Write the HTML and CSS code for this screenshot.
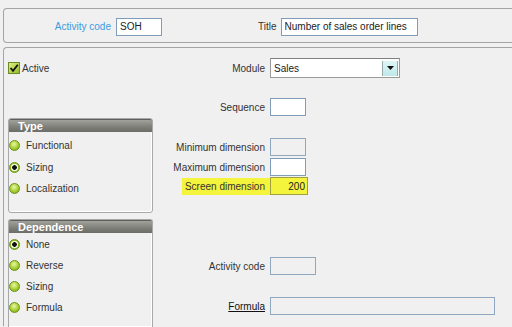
FILE: index.html
```html
<!DOCTYPE html>
<html lang="en">
<head>
  <meta charset="UTF-8">
  <title>Activity code SOH</title>
  <link rel="stylesheet" href="styles.css">
</head>
<body>

<div class="panel head">
  <label class="key">Activity code</label>
  <input class="field code" type="text" value="SOH">
  <label class="title-label">Title</label>
  <input class="field title" type="text" value="Number of sales order lines">
</div>

<div class="panel main">
  <div class="left">
    <div class="active">
      <svg class="check" width="12" height="12" viewBox="0 0 12 12">
        <defs>
          <linearGradient id="chk" x1="0" y1="0" x2="1" y2="1">
            <stop offset="0" stop-color="#e6f08a"/>
            <stop offset="1" stop-color="#8fb82a"/>
          </linearGradient>
        </defs>
        <rect x="0.5" y="0.5" width="11" height="11" fill="url(#chk)" stroke="#6b8c1e"/>
        <path d="M2.5 6 L5 8.8 L9.8 2.8" fill="none" stroke="#111" stroke-width="1.8"/>
      </svg>
      <span>Active</span>
    </div>

    <div class="group type">
      <div class="group-title">Type</div>
      <div class="opt"><span class="radio"></span>Functional</div>
      <div class="opt"><span class="radio on"></span>Sizing</div>
      <div class="opt"><span class="radio"></span>Localization</div>
    </div>

    <div class="group dep">
      <div class="group-title">Dependence</div>
      <div class="opt"><span class="radio on"></span>None</div>
      <div class="opt"><span class="radio"></span>Reverse</div>
      <div class="opt"><span class="radio"></span>Sizing</div>
      <div class="opt"><span class="radio"></span>Formula</div>
    </div>
  </div>

  <div class="right">
    <div class="row r-module">
      <label>Module</label>
      <div class="combo">
        <span>Sales</span>
        <span class="drop">
          <svg width="7" height="4" viewBox="0 0 7 4"><path d="M0 0 H7 L3.5 4 Z" fill="#111"/></svg>
        </span>
      </div>
    </div>
    <div class="row r-seq">
      <label>Sequence</label>
      <input class="field small" type="text">
    </div>
    <div class="row r-min">
      <label>Minimum dimension</label>
      <input class="field small off" type="text">
    </div>
    <div class="row r-max">
      <label>Maximum dimension</label>
      <input class="field small" type="text">
    </div>
    <div class="row r-screen">
      <label><span class="mark">Screen dimension</span></label>
      <input class="field small hl" type="text" value="200">
    </div>
    <div class="row r-act">
      <label>Activity code</label>
      <input class="field code off" type="text">
    </div>
    <div class="row r-formula">
      <label class="link">Formula</label>
      <input class="field wide off" type="text">
    </div>
  </div>
</div>

</body>
</html>
```

FILE: styles.css
```css
body {
  margin: 0;
  background: #f0f0f0;
  font-family: 'Liberation Sans', Arial, sans-serif;
  font-size: 10px;
  color: #333;
  overflow: hidden;
  width: 512px;
  height: 327px;
}

.panel {
  border: 1px solid #a4a4a4;
  border-right: none;
  border-radius: 4px 0 0 4px;
  margin-left: 3px;
  width: 509px;
  box-sizing: border-box;
}

.head {
  margin-top: 8px;
  height: 35px;
  display: flex;
  align-items: center;
  padding-top: 2px;
}
.head .key {
  width: 107px;
  text-align: right;
  color: #3c9be0;
  margin-right: 5px;
}
.head .title-label {
  margin-left: 96px;
  margin-right: 4px;
}

.field {
  box-sizing: border-box;
  height: 18px;
  border: 1px solid #7f9db9;
  background: #fff;
  font-family: inherit;
  font-size: 10px;
  color: #222;
  padding: 0 3px;
  margin: 0;
  outline: none;
}
.field.code { width: 46px; }
.field.title { width: 137px; }
.field.small { width: 36px; }
.field.wide { width: 225px; }
.field.off {
  background: #f0f0f0;
  border-color: #8fa8c0;
}
.field.hl {
  width: 38px;
  background: #f4f43c;
  border-color: #a0a040;
  text-align: right;
  padding-right: 2px;
}

.main {
  margin-top: 4px;
  height: 279px;
  display: flex;
  border-bottom: none;
  border-radius: 4px 0 0 0;
}

.left {
  width: 145px;
  margin-left: 4px;
  padding-top: 14px;
}

.active {
  display: flex;
  align-items: center;
  gap: 2px;
  height: 12px;
}
.check { display: block; }

.group {
  border: 1px solid #a8a8a8;
  border-radius: 3px;
  box-shadow: inset -1px -1px 0 #fff;
  box-sizing: border-box;
}
.group.type {
  margin-top: 44px;
  height: 95px;
}
.group.dep {
  margin-top: 6px;
  height: 108px;
  border-bottom: none;
  border-radius: 3px 3px 0 0;
}
.group-title {
  height: 12px;
  line-height: 12px;
  background: linear-gradient(#a2a29c, #7e7e78 60%, #6c6c68);
  border-top: 1px solid #5e5e5a;
  border-radius: 2px 2px 0 0;
  color: #fff;
  font-weight: bold;
  font-size: 11px;
  padding-left: 9px;
  margin-bottom: 3px;
}
.opt {
  display: flex;
  align-items: center;
  height: 21.5px;
  gap: 6px;
  color: #333;
}
.dep .group-title { margin-bottom: 1px; }
.dep .opt { height: 21px; }
.radio {
  width: 11px;
  height: 11px;
  box-sizing: border-box;
  border-radius: 50%;
  border: 1px solid #6a9418;
  background: radial-gradient(circle at 45% 35%, #eaf7a8, #a8cf30 55%, #6e9a14);
}
.radio.on {
  background: radial-gradient(circle, #111 0 2px, #f2f8e0 2.6px 3.4px, #8fbc24 4px);
}

.right {
  padding-top: 10px;
  margin-left: 4px;
}
.row {
  display: grid;
  grid-template-columns: 113px auto;
  align-items: center;
}
.row label {
  text-align: right;
  padding-right: 5px;
}
.r-seq { margin-top: 20px; }
.r-min { margin-top: 22px; }
.r-max { margin-top: 2px; }
.r-screen { margin-top: 1px; }
.r-act { margin-top: 62px; }
.r-formula { margin-top: 22px; }

.mark {
  background: #f4f43c;
  padding: 3px 5px 3px 3px;
  margin-right: -5px;
}
.link {
  color: #111;
  text-decoration: underline;
}

.combo {
  width: 130px;
  height: 20px;
  box-sizing: border-box;
  border: 1px solid #9a9a9a;
  border-top-color: #808080;
  background: #fff;
  display: flex;
  align-items: center;
  justify-content: space-between;
  padding-left: 3px;
  color: #222;
}
.drop {
  width: 14px;
  height: 15px;
  margin-right: 1px;
  background: linear-gradient(#dff6f6, #bfe9ea);
  border-left: 1px solid #9aa;
  border-right: 1px solid #9aa;
  display: flex;
  align-items: center;
  justify-content: center;
}
.drop svg { display: block; }
```
